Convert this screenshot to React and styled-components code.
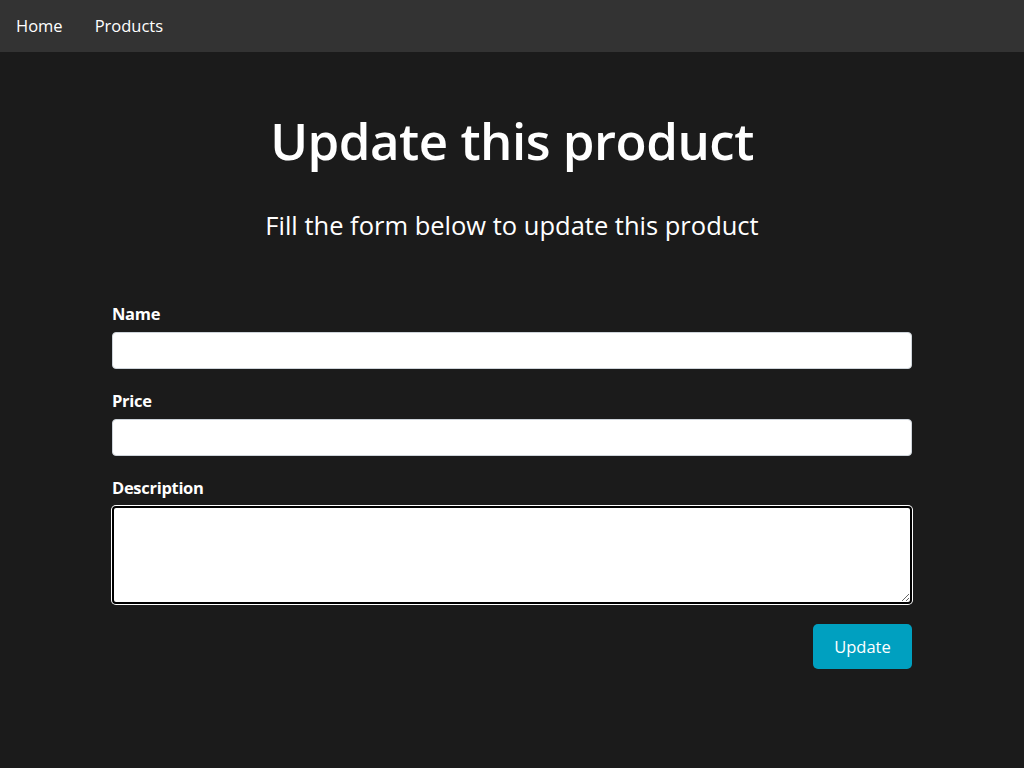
import React from 'react'
import styled, { createGlobalStyle } from 'styled-components'

const GlobalStyle = createGlobalStyle`
  html, body {
    margin: 0;
    padding: 0;
    background-color: #1b1b1b;
    color: white;
    font-family: "Open Sans", "Liberation Sans", sans-serif;
  }
  * {
    box-sizing: border-box;
  }
`

const Nav = styled.nav`
  background-color: #333333;
  height: 52px;
  display: flex;
  align-items: center;
  padding: 0 16px 1px;
  gap: 32px;

  a {
    color: white;
    text-decoration: none;
    font-size: 16.5px;
  }
`

const Main = styled.main`
  width: 800px;
  margin: 0 auto;
  padding-top: 56px;
`

const Title = styled.h1`
  margin: 0;
  text-align: center;
  font-size: 51px;
  font-weight: 600;
  line-height: 64px;
  letter-spacing: -0.5px;
`

const Subtitle = styled.p`
  margin: 38px 0 0;
  text-align: center;
  font-size: 25.5px;
  line-height: 30px;
`

const Form = styled.form`
  margin-top: 62px;
  display: flex;
  flex-direction: column;
`

const Field = styled.div`
  display: flex;
  flex-direction: column;
  margin-bottom: 20px;
`

const Label = styled.label`
  font-size: 16.5px;
  font-weight: 700;
  line-height: 24px;
  margin-bottom: 6px;
  letter-spacing: -0.3px;
`

const Input = styled.input`
  height: 37px;
  border: 1px solid #ced4da;
  border-radius: 4px;
  background: white;
  padding: 6px 12px;
  font-size: 16px;
  font-family: inherit;
`

const TextArea = styled.textarea`
  height: 98px;
  border: 2px solid #000;
  box-shadow: 0 0 0 1px #fff;
  border-radius: 4px;
  background: white;
  padding: 6px 9px;
  font-size: 16px;
  font-family: inherit;
  outline: none;
`

const Actions = styled.div`
  display: flex;
  justify-content: flex-end;
`

const Button = styled.button`
  background-color: #00a0c0;
  color: white;
  border: none;
  border-radius: 5px;
  width: 99px;
  height: 45px;
  font-size: 16.5px;
  font-family: inherit;
  cursor: pointer;
`

const App = () => {
  return (
    <div>
      <GlobalStyle />
      <Nav>
        <a href='#'>Home</a>
        <a href='#'>Products</a>
      </Nav>
      <Main>
        <Title>Update this product</Title>
        <Subtitle>Fill the form below to update this product</Subtitle>
        <Form onSubmit={e => e.preventDefault()}>
          <Field>
            <Label htmlFor='name'>Name</Label>
            <Input id='name' type='text' />
          </Field>
          <Field>
            <Label htmlFor='price'>Price</Label>
            <Input id='price' type='text' />
          </Field>
          <Field>
            <Label htmlFor='description'>Description</Label>
            <TextArea id='description' autoFocus />
          </Field>
          <Actions>
            <Button type='submit'>Update</Button>
          </Actions>
        </Form>
      </Main>
    </div>
  )
}

export default App
